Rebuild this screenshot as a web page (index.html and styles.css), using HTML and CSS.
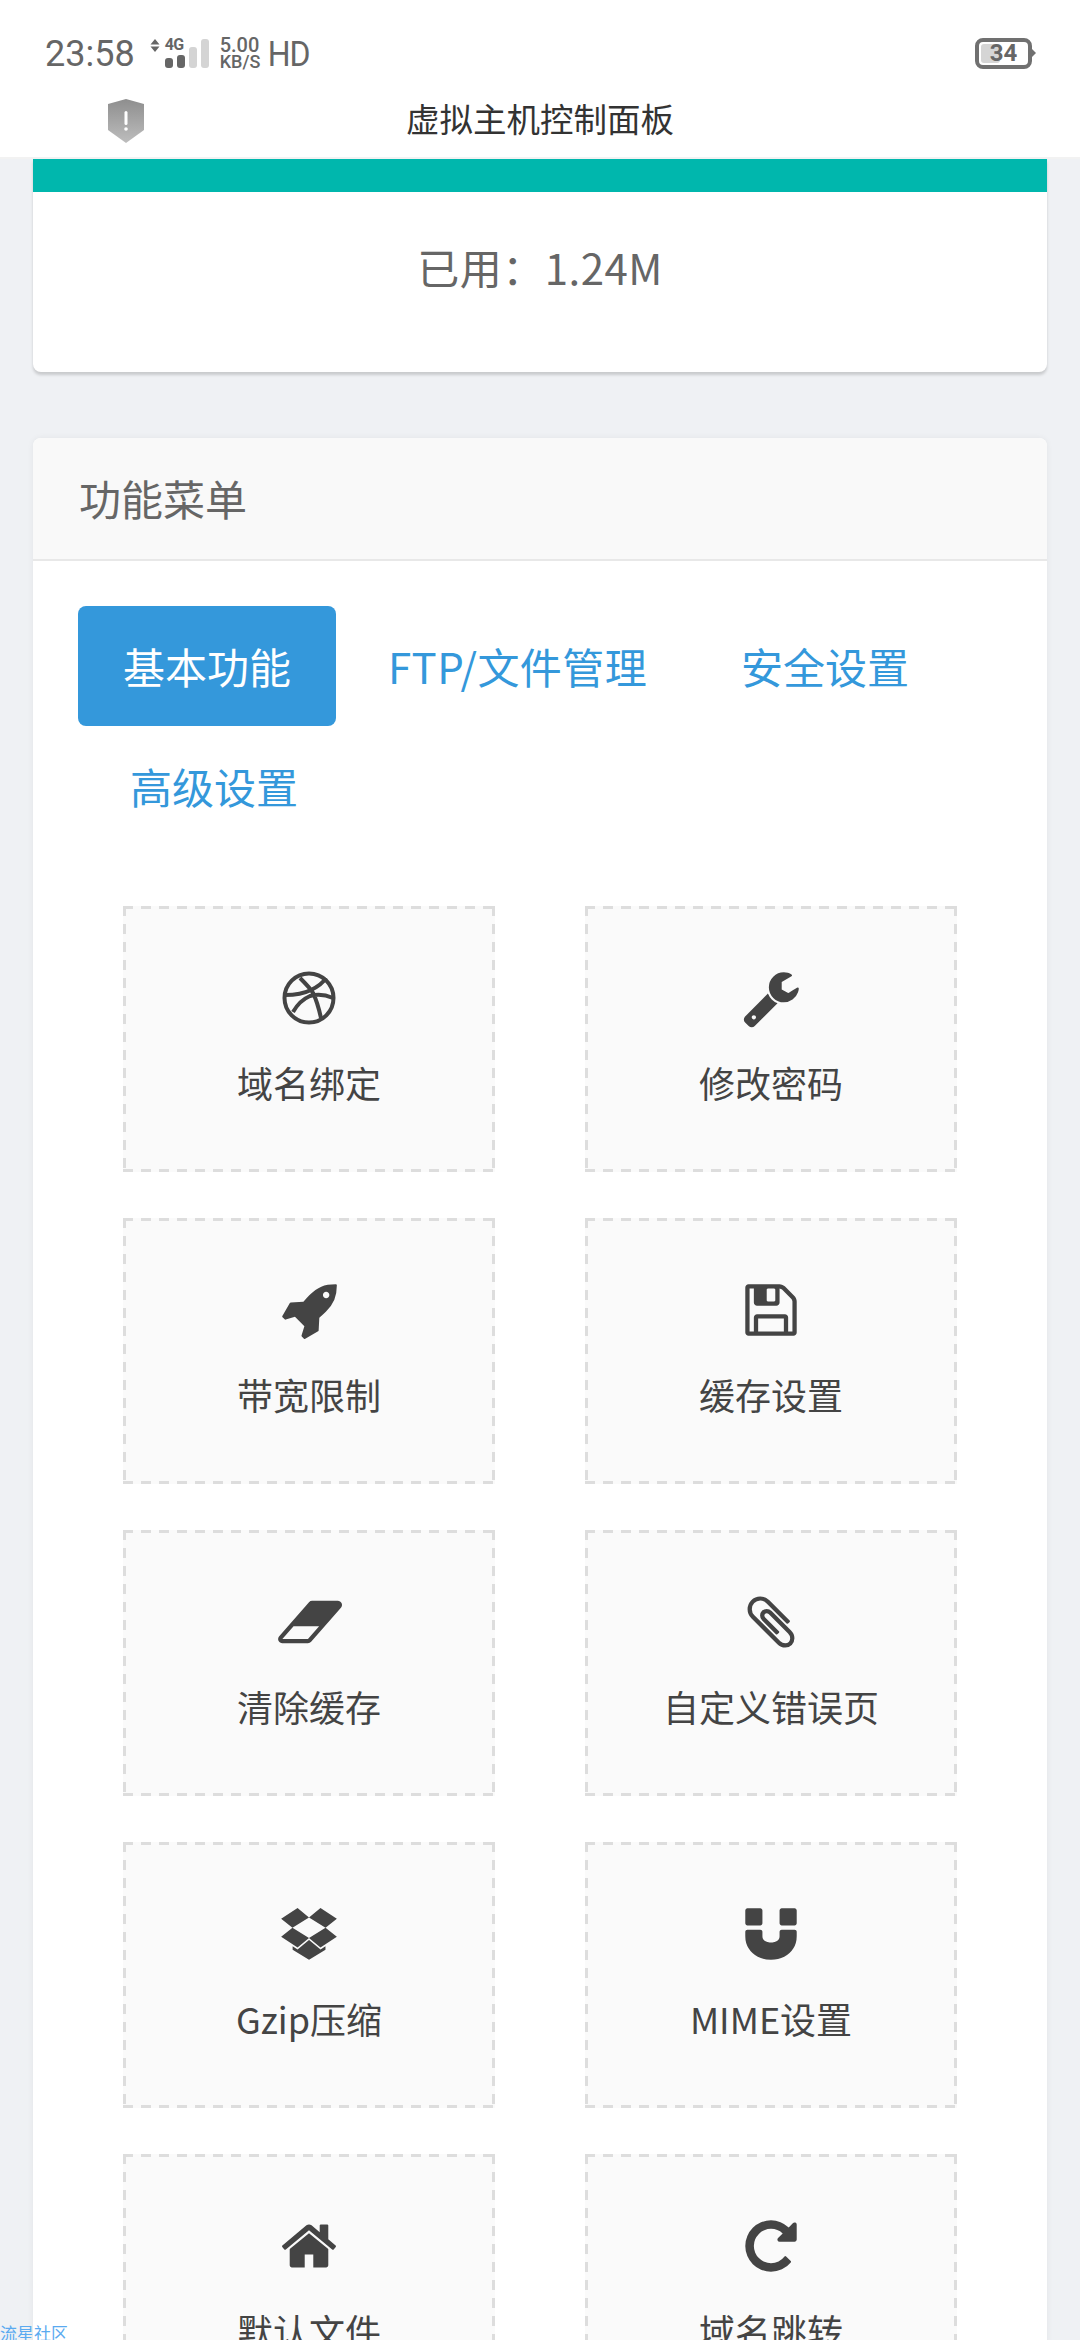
FILE: index.html
```html
<!DOCTYPE html>
<html lang="zh-CN">
<head>
<meta charset="utf-8">
<title>虚拟主机控制面板</title>
<link rel="stylesheet" href="styles.css">
</head>
<body>
<div class="phone">
  <header class="top">
    <div class="status">
      <span class="time">23:58</span>
      <svg class="arrows" viewBox="0 0 10 13"><path d="M5 0l4.500 5.500H.5zM5 13L.5 7.500h9z"/></svg>
      <div class="signal">
        <span class="net">4G</span>
        <div class="bars">
          <i class="bar b1"></i><i class="bar b2"></i><i class="bar b3"></i><i class="bar b4"></i>
        </div>
      </div>
      <div class="speed"><span class="speed-val">5.00</span><span class="speed-unit">KB/S</span></div>
      <span class="hd">HD</span>
      <div class="battery"><i class="battery-fill"></i><span class="battery-num">34</span></div>
    </div>
    <div class="appbar">
      <svg class="shield" viewBox="0 0 36 44">
        <defs><linearGradient id="sg" x1="0" y1="0" x2="0" y2="1"><stop offset="0" stop-color="#8e8e8e"/><stop offset="1" stop-color="#bdbdbd"/></linearGradient></defs>
        <path d="M18 0l18 5v26L18 44 0 31V5z" fill="url(#sg)"/>
        <rect x="16.500" y="12" width="3" height="14" rx="1.500" fill="#fff"/><circle cx="18" cy="30" r="1.800" fill="#fff"/>
      </svg>
      <span class="apptitle">虚拟主机控制面板</span>
    </div>
  </header>

  <section class="usage">
    <div class="usage-bar"></div>
    <div class="usage-text">已用：1.24M</div>
  </section>

  <section class="panel">
    <div class="panel-head">功能菜单</div>
    <div class="panel-body">
      <nav class="tabs">
        <span class="tab active">基本功能</span>
        <span class="tab tab-wide">FTP/文件管理</span>
        <span class="tab">安全设置</span>
        <span class="tab">高级设置</span>
      </nav>
      <div class="grid">
        <a class="item">
          <svg class="ico" width="60" height="60" viewBox="0 0 60 60" fill="none" stroke="#444" stroke-width="4"><circle cx="30" cy="30" r="24.500"/><path d="M21 10c5 5 11 11 13 15s6 16 8 25M6 27c10 0 18-1 26-5 6-3 12-7 15-12M14 44c4-7 10-13 17-16 7-2 16-1 23 2"/></svg>
          <span class="label">域名绑定</span>
        </a>
        <a class="item">
          <svg class="ico" width="56" height="60" viewBox="64 0 1664 1792" fill="#444"><path d="M448 1472q0-26-19-45t-45-19-45 19-19 45 19 45 45 19 45-19 19-45zm644-420l-682 682q-37 37-90 37-52 0-91-37l-106-108q-38-36-38-90 0-53 38-91l681-681q39 98 114.500 173.500t173.500 114.500zm634-435q0 39-23 106-47 134-164.500 217.500t-258.500 83.500q-185 0-316.500-131.500t-131.500-316.500 131.500-316.500 316.500-131.500q58 0 121.500 16.500t107.500 46.500q16 11 16 28t-16 28l-293 169v224l193 107q5-3 79-48.500t135.500-81 70.500-35.500q15 0 23.500 10t8.500 25z"/></svg>
          <span class="label">修改密码</span>
        </a>
        <a class="item">
          <svg class="ico" width="56" height="60" viewBox="64 0 1664 1792" fill="#444"><path d="M1504 448q0-40-28-68t-68-28-68 28-28 68 28 68 68 28 68-28 28-68zm224-288q0 249-75.500 430.500t-253.500 360.500q-81 80-195 176l-20 379q-2 16-16 26l-384 224q-7 4-16 4-12 0-23-9l-64-64q-13-14-8-32l85-276-281-281-276 85q-3 1-9 1-14 0-23-9l-64-64q-17-19-5-39l224-384q10-14 26-16l379-20q96-114 176-195 188-187 358-258t431-71q14 0 24 9.500t10 22.500z"/></svg>
          <span class="label">带宽限制</span>
        </a>
        <a class="item">
          <svg class="ico" width="52" height="60" viewBox="128 0 1536 1792" fill="#444"><path d="M512 1536h768v-384h-768v384zm896 0h128v-896q0-14-10-38.500t-20-34.500l-281-281q-10-10-34-20t-39-10v416q0 40-28 68t-68 28h-576q-40 0-68-28t-28-68v-416h-128v1280h128v-416q0-40 28-68t68-28h832q40 0 68 28t28 68v416zm-384-928v-320q0-13-9.500-22.500t-22.500-9.500h-192q-13 0-22.500 9.500t-9.500 22.500v320q0 13 9.500 22.500t22.500 9.500h192q13 0 22.500-9.500t9.500-22.500zm640 32v928q0 40-28 68t-68 28h-1344q-40 0-68-28t-28-68v-1344q0-40 28-68t68-28h928q40 0 88 20t76 48l280 280q28 28 48 76t20 88z"/></svg>
          <span class="label">缓存设置</span>
        </a>
        <a class="item">
          <svg class="ico" width="66" height="60" viewBox="0 0 1984 1792" fill="#444"><path d="M960 1408l336-384h-768l-336 384h768zm1013-1077q15 34 9.500 71.500t-30.500 65.500l-896 1024q-38 44-96 44h-768q-38 0-69.500-20.500t-47.500-54.500q-15-34-9.500-71.500t30.500-65.500l896-1024q38-44 96-44h768q38 0 69.500 20.500t47.500 54.500z"/></svg>
          <span class="label">清除缓存</span>
        </a>
        <a class="item">
          <svg class="ico" width="48" height="60" viewBox="192 0 1408 1792" fill="#444"><path d="M1596 1385q0 117-79 196t-196 79q-135 0-235-100l-777-776q-113-115-113-271 0-159 110-270t269-111q158 0 273 113l605 606q10 10 10 22 0 16-30.500 46.500t-46.500 30.500q-13 0-23-10l-606-607q-79-77-181-77-106 0-179 75t-73 181q0 105 76 181l776 777q63 63 145 63 64 0 106-42t42-106q0-82-63-145l-581-581q-26-24-60-24-29 0-48 19t-19 48q0 32 25 59l410 410q10 10 10 22 0 16-31 47t-47 31q-12 0-22-10l-410-410q-63-61-63-149 0-82 57-139t139-57q88 0 149 63l581 581q100 98 100 235z"/></svg>
          <span class="label">自定义错误页</span>
        </a>
        <a class="item">
          <svg class="ico" width="56" height="60" viewBox="64 0 1664 1792" fill="#444"><path d="M402 707l494 305-342 285-490-319zm986 555v108l-490 293v1l-1-1-1 1v-1l-489-293v-108l147 96 342-284v-2l1 1 1-1v2l343 284zm-834-1144l342 285-494 304-338-270zm836 589l338 271-489 319-343-285zm-151-589l489 319-338 270-494-304z"/></svg>
          <span class="label">Gzip压缩</span>
        </a>
        <a class="item">
          <svg class="ico" width="52" height="60" viewBox="0 0 1536 1792" fill="#444"><path d="M1536 832v128q0 201-98.500 362t-274 251.500-395.500 90.500-395.500-90.500-274-251.500-98.500-362v-128q0-26 19-45t45-19h384q26 0 45 19t19 45v128q0 52 23.500 90t53.500 57 71 30 64 13 44 2 44-2 64-13 71-30 53.500-57 23.500-90v-128q0-26 19-45t45-19h384q26 0 45 19t19 45zm-1024-640v384q0 26-19 45t-45 19h-384q-26 0-45-19t-19-45v-384q0-26 19-45t45-19h384q26 0 45 19t19 45zm1024 0v384q0 26-19 45t-45 19h-384q-26 0-45-19t-19-45v-384q0-26 19-45t45-19h384q26 0 45 19t19 45z"/></svg>
          <span class="label">MIME设置</span>
        </a>
        <a class="item">
          <svg class="ico" width="56" height="60" viewBox="64 0 1664 1792" fill="#444"><path d="M1472 992v480q0 26-19 45t-45 19h-384v-384h-256v384h-384q-26 0-45-19t-19-45v-480q0-1 .5-3t.5-3l575-474 575 474q1 2 1 6zm223-69l-62 74q-8 9-21 11h-3q-13 0-21-7l-692-577-692 577q-12 8-24 7-13-2-21-11l-62-74q-8-10-7-23.500t11-21.500l719-599q32-26 76-26t76 26l244 204v-195q0-14 9-23t23-9h192q14 0 23 9t9 23v408l219 182q10 8 11 21.500t-7 23.500z"/></svg>
          <span class="label">默认文件</span>
        </a>
        <a class="item">
          <svg class="ico" width="52" height="60" viewBox="128 0 1536 1792" fill="#444"><path d="M1664 256v448q0 26-19 45t-45 19h-448q-42 0-59-40-17-39 14-69l138-138q-148-137-349-137-104 0-198.500 40.500t-163.500 109.500-109.500 163.500-40.500 198.500 40.500 198.500 109.500 163.500 163.500 109.500 198.500 40.500q119 0 225-52t179-147q7-10 23-12 15 0 25 9l137 138q9 8 9.500 20.500t-7.500 22.500q-109 132-264 204.500t-327 72.500q-156 0-298-61t-245-164-164-245-61-298 61-298 164-245 245-164 298-61q147 0 284.500 55.500t244.500 156.500l130-129q29-31 70-14 39 17 39 59z"/></svg>
          <span class="label">域名跳转</span>
        </a>
      </div>
    </div>
  </section>

  <a class="watermark">流星社区</a>
</div>
</body>
</html>
```
FILE: styles.css
```css
* { box-sizing: border-box; }
html, body { margin: 0; padding: 0; }
body { font-family: "Noto Sans CJK SC", "Noto Sans", sans-serif; background: #eff1f4; }
.phone { position: relative; width: 1080px; height: 2340px; overflow: hidden; background: #eff1f4; }

.top { background: #fff; height: 157px; box-shadow: 0 2px 0 #f2f2f2; position: relative; z-index: 2; }
.status { display: flex; align-items: flex-start; height: 80px; padding: 35px 45px 0; color: #666; font-family: Roboto, sans-serif; }
.time { font-size: 36px; line-height: 40px; margin-top: -1px; }
.arrows { width: 10px; height: 13px; fill: #666; margin: 4px 0 0 15px; }
.signal { display: flex; flex-direction: column; margin-left: 5px; width: 44px; position: relative; height: 34px; }
.net { font-size: 16px; line-height: 14px; font-weight: 700; letter-spacing: -.5px; margin-top: 3px; }
.bars { position: absolute; left: 0; top: 4px; width: 44px; height: 29px; display: flex; align-items: flex-end; gap: 4px; }
.bar { display: block; width: 8px; border-radius: 3px; background: #666; }
.b1 { height: 10px; }
.b2 { height: 13px; }
.b3 { height: 21px; background: #d4d4d4; }
.b4 { height: 29px; background: #d4d4d4; }
.speed { display: flex; flex-direction: column; margin: 2px 0 0 11px; width: 42px; font-size: 20px; font-weight: 500; line-height: 16px; }
.speed-unit { font-size: 18px; margin-top: 1px; }
.hd { font-size: 32px; line-height: 40px; margin: -1px 0 0 6px; letter-spacing: -1px; transform: scaleY(1.08); }
.battery { position: relative; margin-left: auto; margin-right: 3px; width: 57px; height: 31px; margin-top: 3px; border: 4px solid #707070; border-radius: 8px; display: flex; align-items: center; justify-content: center; }
.battery::after { content: ""; position: absolute; right: -8px; top: 7px; width: 0; height: 0; border-left: 4px solid #707070; border-top: 4px solid transparent; border-bottom: 4px solid transparent; }
.battery-fill { position: absolute; left: 2px; top: 2px; bottom: 2px; width: 19px; background: #d5d5d5; border-radius: 3px; }
.battery-num { position: relative; font-size: 24px; font-weight: 700; color: #666; line-height: 23px; }

.appbar { position: relative; height: 77px; padding-bottom: 2px; display: flex; align-items: center; justify-content: center; }
.shield { position: absolute; left: 108px; top: 19px; width: 36px; height: 44px; }
.apptitle { font-size: 33.500px; color: #333; line-height: 50px; }

.usage { margin: 2px 33px 0; height: 213px; background: #fff; border-radius: 0 0 8px 8px; box-shadow: 0 3px 3px rgba(0,0,0,.16); overflow: hidden; }
.usage-bar { height: 33px; background: #00b7ad; }
.usage-text { height: 154px; font-size: 42px; line-height: 149px; text-align: center; color: #666; letter-spacing: .5px; }

.panel { margin: 66px 33px 0; background: #fff; border-radius: 8px 8px 0 0; box-shadow: 0 0 6px rgba(0,0,0,.06); }
.panel-head { height: 123px; padding-left: 46px; font-size: 42px; line-height: 120px; color: #666; background: #f9f9f9; border-bottom: 2px solid #e8e8e8; border-radius: 8px 8px 0 0; }
.panel-body { padding: 45px 45px 0; }

.tabs { display: flex; flex-wrap: wrap; }
.tab { display: block; height: 120px; line-height: 120px; padding: 0 45px; margin-left: 7px; font-size: 42px; color: #3498db; border-radius: 8px; }
.tab.active { margin-left: 0; background: #3498db; color: #fff; }
.tab-wide { letter-spacing: .4px; padding-right: 42px; }

.grid { display: grid; grid-template-columns: 1fr 1fr; margin-top: 60px; }
.item {
  display: flex; flex-direction: column; align-items: center;
  height: 266px; margin: 0 45px 46px; padding-top: 62px;
  background:
    repeating-linear-gradient(90deg, #ddd 0 10px, transparent 10px 18px) left top / 100% 3px no-repeat,
    repeating-linear-gradient(90deg, #ddd 0 10px, transparent 10px 18px) left bottom / 100% 3px no-repeat,
    repeating-linear-gradient(180deg, #ddd 0 10px, transparent 10px 18px) left top / 3px 100% no-repeat,
    repeating-linear-gradient(180deg, #ddd 0 10px, transparent 10px 18px) right top / 3px 100% no-repeat,
    #fafafa;
}
.ico { display: block; }
.label { margin-top: 27px; font-size: 36px; line-height: 54px; color: #444; white-space: nowrap; }

.watermark { position: absolute; left: 0; bottom: -3px; font-size: 17px; line-height: 20px; color: #5aaaf0; }
```
